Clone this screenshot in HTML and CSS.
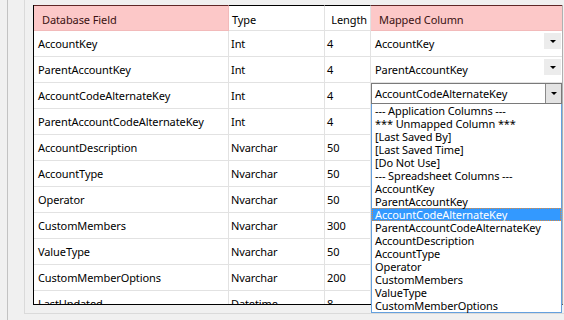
FILE: index.html
```html
<!DOCTYPE html>
<html>
<head>
<meta charset="utf-8">
<link rel="stylesheet" href="styles.css">
</head>
<body>
<div class="panel">
  <div class="group">
    <div class="gridwrap">
      <div class="grid">
        <div class="hcell hl c1">Database Field</div>
        <div class="hcell c2">Type</div>
        <div class="hcell c3">Length</div>
        <div class="hcell hl c4">Mapped Column</div>

        <div class="cell c1">AccountKey</div>
        <div class="cell c2">Int</div>
        <div class="cell c3">4</div>
        <div class="cell c4"><span class="ctext">AccountKey</span><span class="cbtn"><span class="tri"></span></span></div>

        <div class="cell c1">ParentAccountKey</div>
        <div class="cell c2">Int</div>
        <div class="cell c3">4</div>
        <div class="cell c4"><span class="ctext">ParentAccountKey</span><span class="cbtn"><span class="tri"></span></span></div>

        <div class="cell c1">AccountCodeAlternateKey</div>
        <div class="cell c2">Int</div>
        <div class="cell c3">4</div>
        <div class="cell c4 active"><div class="combo"><span class="ctext">AccountCodeAlternateKey</span><span class="abtn"><span class="tri"></span></span></div></div>

        <div class="cell c1">ParentAccountCodeAlternateKey</div>
        <div class="cell c2">Int</div>
        <div class="cell c3">4</div>
        <div class="cell c4"></div>

        <div class="cell c1">AccountDescription</div>
        <div class="cell c2">Nvarchar</div>
        <div class="cell c3">50</div>
        <div class="cell c4"></div>

        <div class="cell c1">AccountType</div>
        <div class="cell c2">Nvarchar</div>
        <div class="cell c3">50</div>
        <div class="cell c4"></div>

        <div class="cell c1">Operator</div>
        <div class="cell c2">Nvarchar</div>
        <div class="cell c3">50</div>
        <div class="cell c4"></div>

        <div class="cell c1">CustomMembers</div>
        <div class="cell c2">Nvarchar</div>
        <div class="cell c3">300</div>
        <div class="cell c4"></div>

        <div class="cell c1">ValueType</div>
        <div class="cell c2">Nvarchar</div>
        <div class="cell c3">50</div>
        <div class="cell c4"></div>

        <div class="cell c1">CustomMemberOptions</div>
        <div class="cell c2">Nvarchar</div>
        <div class="cell c3">200</div>
        <div class="cell c4"></div>

        <div class="cell c1">LastUpdated</div>
        <div class="cell c2">Datetime</div>
        <div class="cell c3">8</div>
        <div class="cell c4"></div>
      </div>
      <ul class="droplist">
        <li>--- Application Columns ---</li>
        <li>*** Unmapped Column ***</li>
        <li>[Last Saved By]</li>
        <li>[Last Saved Time]</li>
        <li>[Do Not Use]</li>
        <li>--- Spreadsheet Columns ---</li>
        <li>AccountKey</li>
        <li>ParentAccountKey</li>
        <li class="sel">AccountCodeAlternateKey</li>
        <li>ParentAccountCodeAlternateKey</li>
        <li>AccountDescription</li>
        <li>AccountType</li>
        <li>Operator</li>
        <li>CustomMembers</li>
        <li>ValueType</li>
        <li>CustomMemberOptions</li>
      </ul>
    </div>
  </div>
</div>
</body>
</html>
```
FILE: styles.css
```css
* { box-sizing: border-box; }
html, body {
  margin: 0;
  padding: 0;
  width: 564px;
  height: 320px;
  overflow: hidden;
  background: #f0f0f0;
  font-family: "Noto Sans", "DejaVu Sans", sans-serif;
  font-size: 11px;
  letter-spacing: -0.1px;
  color: #000;
}
.panel {
  margin-left: 7px;
  height: 320px;
  border-left: 1px solid #c2c2c2;
  padding-left: 16px;
}
.group {
  height: 314px;
  border-left: 1px solid #dadada;
  border-bottom: 1px solid #dadada;
  padding: 5px 0 0 8px;
}
.gridwrap {
  position: relative;
  width: 530px;
}
.grid {
  display: grid;
  grid-template-columns: 195px 96px 46px 191px;
  grid-auto-rows: 26px;
  height: 300px;
  overflow: hidden;
  background: #fff;
  border-left: 1px solid #000;
  border-right: 1px solid #b0b0b0;
  border-bottom: 1px solid #000;
}
.hcell {
  display: flex;
  align-items: center;
  padding-top: 2px;
  border-top: 1px solid #000;
  border-bottom: 1px solid #e2e2e2;
  border-right: 1px solid #e2e2e2;
  background: #fff;
  white-space: nowrap;
}
.hcell.hl {
  background: #fcc8c8;
  color: #3a1212;
  border-top-color: #5e2626;
  border-bottom-color: #f2baba;
  border-right-color: #f2baba;
}
.hcell.c1 { padding-left: 8px; }
.hcell.c2 { padding-left: 3px; }
.hcell.c3 { justify-content: flex-end; padding-right: 3px; }
.hcell.c4 { padding-left: 8px; border-right: none; }
.cell {
  display: flex;
  align-items: center;
  border-bottom: 1px solid #e2e2e2;
  border-right: 1px solid #e2e2e2;
  white-space: nowrap;
  overflow: hidden;
}
.cell.c1 { padding-left: 4px; }
.cell.c2 { padding-left: 2px; }
.cell.c3 { padding-left: 2px; }
.cell.c4 { padding-left: 4px; border-right: none; }
.ctext { flex: 1; }
.cbtn {
  align-self: flex-start;
  margin-top: 2px;
  margin-right: 1px;
  width: 17px;
  height: 16px;
  background: #ececec;
  display: flex;
  align-items: center;
  justify-content: center;
}
.tri {
  width: 0;
  height: 0;
  border-left: 3px solid transparent;
  border-right: 3px solid transparent;
  border-top: 3px solid #000;
}
.cell.active {
  padding-left: 0;
  align-items: flex-start;
}
.combo {
  width: 100%;
  height: 21px;
  border: 1px solid #7a7a7a;
  display: flex;
  align-items: center;
  padding-left: 3px;
}
.abtn {
  align-self: stretch;
  width: 16px;
  border-left: 1px solid #8a8a8a;
  background: #e3e3e3;
  display: flex;
  align-items: center;
  justify-content: center;
}
.droplist {
  position: absolute;
  left: 338px;
  top: 99px;
  width: 191px;
  margin: 0;
  padding: 0;
  list-style: none;
  background: #fff;
  border: 1px solid #64a0de;
  border-top: none;
}
.droplist li {
  height: 13px;
  line-height: 13px;
  padding-left: 3px;
  white-space: nowrap;
}
.droplist li.sel {
  background: #3399ff;
  color: #fff;
  border: 1px dotted #e0893a;
  padding-left: 2px;
  line-height: 11px;
}
```
